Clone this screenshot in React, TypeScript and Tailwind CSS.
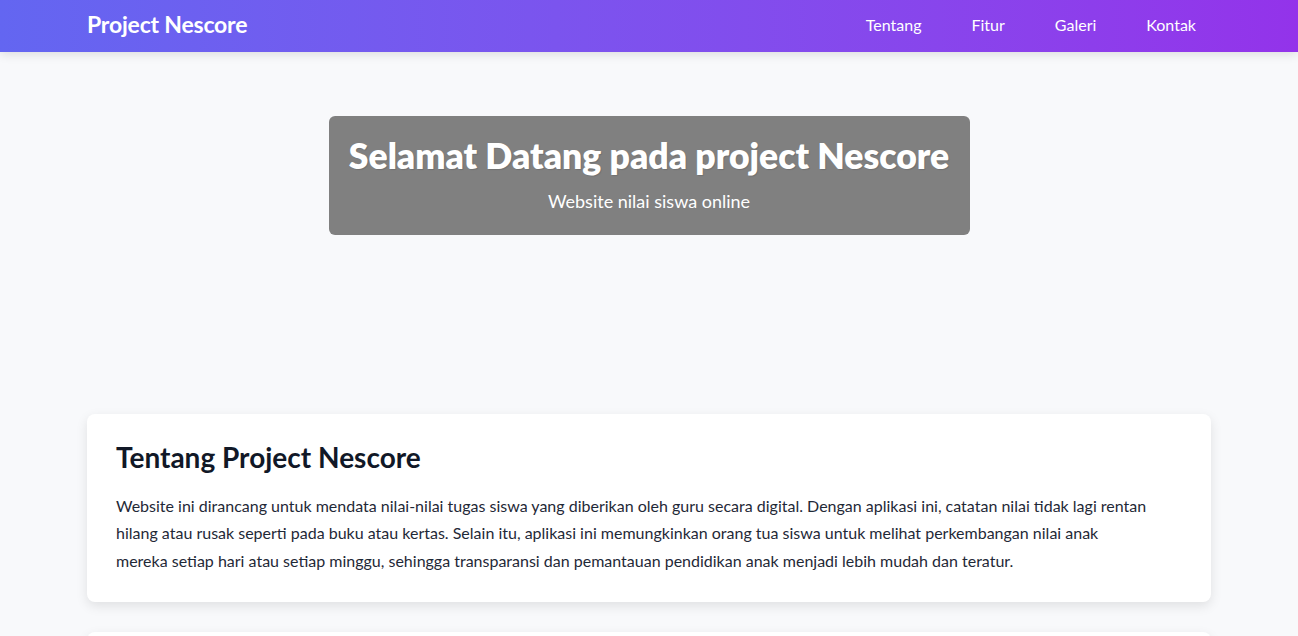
export default function App() {
  const links = ["Tentang", "Fitur", "Galeri", "Kontak"];

  return (
    <div className="min-h-screen bg-[#f8f9fb] font-['Lato','Liberation_Sans',sans-serif]">
      {/* Navbar */}
      <nav className="h-[52px] bg-gradient-to-r from-[#6366f1] to-[#9333ea] shadow-[0_2px_10px_rgba(0,0,0,0.12)]">
        <div className="mx-[87px] h-full flex items-center justify-between pb-[3px]">
          <span className="text-white font-bold text-[23px] tracking-[-0.2px]">Project Nescore</span>
          <ul className="flex items-center gap-[50px] pr-[15px]">
            {links.map((l) => (
              <li key={l} className="text-white text-[16px]">
                {l}
              </li>
            ))}
          </ul>
        </div>
      </nav>

      {/* Hero */}
      <section className="pt-16 flex justify-center">
        <div className="w-[641px] bg-[#808080] rounded-md pt-[19px] pb-[20px] text-center text-white">
          <h1 className="text-[35.5px] leading-[1.2] font-extrabold mb-[10px] [text-shadow:1px_1px_1px_rgba(0,0,0,0.12)]">
            Selamat Datang pada project Nescore
          </h1>
          <p className="text-[18px] leading-[1.5]">Website nilai siswa online</p>
        </div>
      </section>

      {/* About */}
      <section className="mx-[87px] mt-[179px] bg-white rounded-lg shadow-[0_4px_12px_rgba(0,0,0,0.1)] px-[29px] pt-[27px] pb-[28px]">
        <h2 className="text-[28px] leading-[1.2] font-bold text-[#111827] mb-[18px]">Tentang Project Nescore</h2>
        <p className="text-[16px] leading-[1.7] text-[#1f2937]">
          Website ini dirancang untuk mendata nilai-nilai tugas siswa yang diberikan oleh guru secara digital. Dengan
          aplikasi ini, catatan nilai tidak lagi rentan
          <br />
          hilang atau rusak seperti pada buku atau kertas. Selain itu, aplikasi ini memungkinkan orang tua siswa untuk
          melihat perkembangan nilai anak
          <br />
          mereka setiap hari atau setiap minggu, sehingga transparansi dan pemantauan pendidikan anak menjadi lebih
          mudah dan teratur.
        </p>
      </section>

      {/* Next card */}
      <section className="mx-[87px] mt-[30px] bg-white rounded-lg shadow-[0_4px_12px_rgba(0,0,0,0.1)] h-[200px]" />
    </div>
  );
}
